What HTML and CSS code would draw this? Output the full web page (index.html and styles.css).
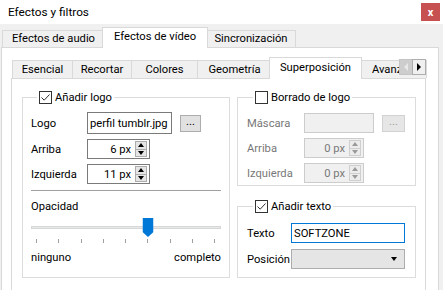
FILE: index.html
```html
<!DOCTYPE html>
<html lang="es">
<head>
<meta charset="utf-8">
<title>Efectos y filtros</title>
<link rel="stylesheet" href="styles.css">
</head>
<body>
<div class="titlebar">
  <span class="title">Efectos y filtros</span>
  <span class="close">x</span>
</div>
<div class="client">
  <div class="tabbar outer-tabs">
    <div class="tab">Efectos de audio</div>
    <div class="tab active">Efectos de vídeo</div>
    <div class="tab">Sincronización</div>
  </div>
  <div class="pane outer-pane">
    <div class="tabbar inner-tabs">
      <div class="tab">Esencial</div>
      <div class="tab">Recortar</div>
      <div class="tab">Colores</div>
      <div class="tab">Geometría</div>
      <div class="tab active">Superposición</div>
      <div class="tab tab-last">Avanzado</div>
      <div class="scroller">
        <span class="scroll-btn scroll-left"><span class="arrow-left"></span></span>
        <span class="scroll-btn scroll-right"><span class="arrow-right"></span></span>
      </div>
    </div>
    <div class="pane inner-pane">
      <fieldset class="group group-logo">
        <legend class="legend">
          <span class="check checked"><svg width="11" height="11" viewBox="0 0 11 11"><path d="M1.5 5.5 L4.2 8.2 L9.5 2.5" fill="none" stroke="#333" stroke-width="1"/></svg></span>
          <span>Añadir logo</span>
        </legend>
        <div class="form form-logo">
          <span class="lbl">Logo</span>
          <div class="field-row">
            <div class="edit edit-logo">perfil tumblr.jpg</div>
            <div class="btn">...</div>
          </div>
          <span class="lbl">Arriba</span>
          <div class="spin">
            <span class="spin-val">6 px</span>
            <span class="spin-btns"><span class="spin-up"><i class="tri-up"></i></span><span class="spin-down"><i class="tri-down"></i></span></span>
          </div>
          <span class="lbl">Izquierda</span>
          <div class="spin">
            <span class="spin-val">11 px</span>
            <span class="spin-btns"><span class="spin-up"><i class="tri-up"></i></span><span class="spin-down"><i class="tri-down"></i></span></span>
          </div>
        </div>
        <div class="sep"></div>
        <div class="opacity">
          <div class="op-label">Opacidad</div>
          <div class="slider">
            <div class="groove"></div>
            <div class="track">
              <svg class="handle" style="left: 62.5%" width="11" height="19" viewBox="0 0 11 19"><path d="M0 0 H11 V14 L5.5 19 L0 14 Z" fill="#0078d7"/></svg>
            </div>
          </div>
          <div class="ticks">
            <i></i><i></i><i></i><i></i><i></i><i></i><i></i><i></i><i></i>
          </div>
          <div class="ends"><span>ninguno</span><span>completo</span></div>
        </div>
      </fieldset>
      <div class="col-right">
        <fieldset class="group group-erase">
          <legend class="legend">
            <span class="check"></span>
            <span>Borrado de logo</span>
          </legend>
          <div class="form form-erase">
            <span class="lbl disabled">Máscara</span>
            <div class="field-row">
              <div class="edit edit-mask disabled-box"></div>
              <div class="btn btn-disabled">...</div>
            </div>
            <span class="lbl disabled">Arriba</span>
            <div class="spin spin-disabled">
              <span class="spin-val">0 px</span>
              <span class="spin-btns"><span class="spin-up"><i class="tri-up"></i></span><span class="spin-down"><i class="tri-down"></i></span></span>
            </div>
            <span class="lbl disabled">Izquierda</span>
            <div class="spin spin-disabled">
              <span class="spin-val">0 px</span>
              <span class="spin-btns"><span class="spin-up"><i class="tri-up"></i></span><span class="spin-down"><i class="tri-down"></i></span></span>
            </div>
          </div>
        </fieldset>
        <fieldset class="group group-text">
          <legend class="legend">
            <span class="check checked"><svg width="11" height="11" viewBox="0 0 11 11"><path d="M1.5 5.5 L4.2 8.2 L9.5 2.5" fill="none" stroke="#333" stroke-width="1"/></svg></span>
            <span>Añadir texto</span>
          </legend>
          <div class="form form-text">
            <span class="lbl">Texto</span>
            <div class="edit edit-focus">SOFTZONE</div>
            <span class="lbl">Posición</span>
            <div class="combo"><i class="tri-down combo-arrow"></i></div>
          </div>
        </fieldset>
      </div>
    </div>
  </div>
</div>
</body>
</html>
```
FILE: styles.css
```css
* { box-sizing: border-box; }

body {
  margin: 0;
  width: 443px;
  height: 290px;
  overflow: hidden;
  background: #f0f0f0;
  font-family: Roboto, "Noto Sans", sans-serif;
  font-size: 11.2px;
  line-height: 15px;
  color: #000;
}

.titlebar {
  height: 24px;
  background: #fff;
  display: flex;
  align-items: center;
  justify-content: space-between;
  padding: 0 3px 0 8px;
}

.title { font-size: 11.8px; }

.close {
  width: 19px;
  height: 18px;
  background: #c75050;
  color: #fff;
  font-size: 11px;
  font-weight: bold;
  display: flex;
  align-items: center;
  justify-content: center;
}

.client { padding-top: 3px; }

.tabbar {
  display: grid;
  align-items: end;
}

.outer-tabs {
  grid-template-columns: 102px 102px 89px;
  padding-left: 2px;
  height: 20px;
}

.tab {
  height: 17px;
  margin-right: -1px;
  border: 1px solid #d9d9d9;
  border-bottom: 0;
  background: #f0f0f0;
  text-align: center;
  line-height: 16px;
  white-space: nowrap;
  overflow: hidden;
}

.tab.active {
  height: 21px;
  margin: 0 -2px -1px;
  background: #fff;
  position: relative;
  z-index: 1;
  line-height: 18px;
}

.pane {
  background: #fff;
  border: 1px solid #d9d9d9;
}

.outer-pane {
  margin-left: 1px;
  width: 438px;
  height: 260px;
  padding: 9px 0 0 9px;
}

.inner-tabs {
  grid-template-columns: 60px 59px 66px 74px 89px 1fr;
  width: 415px;
  height: 21px;
  padding-left: 1px;
  position: relative;
}

.inner-tabs .tab { height: 18px; line-height: 17px; }
.inner-tabs .tab.active { height: 22px; line-height: 19px; }
.inner-tabs .tab-last { text-align: left; padding-left: 11px; }

.scroller {
  position: absolute;
  right: 0;
  top: 2px;
  display: flex;
  z-index: 2;
}

.scroll-btn {
  width: 14px;
  height: 16px;
  display: flex;
  align-items: center;
  justify-content: center;
  border: 1px solid #adadad;
}

.scroll-left { background: #cdcdcd; border-color: #c4c4c4; }
.scroll-right { background: #f0f0f0; margin-left: -1px; }

.arrow-left {
  width: 0; height: 0;
  border-top: 4px solid transparent;
  border-bottom: 4px solid transparent;
  border-right: 4px solid #e8e8e8;
}

.arrow-right {
  width: 0; height: 0;
  border-top: 4px solid transparent;
  border-bottom: 4px solid transparent;
  border-left: 4px solid #000;
}

.inner-pane {
  width: 415px;
  height: 230px;
  display: flex;
  gap: 7px;
  padding: 11px 0 0 10px;
}

.group {
  margin: 0;
  padding: 0;
  min-width: 0;
  border: 1px solid #dcdcdc;
}

.legend {
  margin-left: 6px;
  padding: 0 2px;
  display: flex;
  align-items: center;
  gap: 3px;
  height: 15px;
  line-height: 15px;
}

.check {
  width: 13px;
  height: 13px;
  border: 1px solid #333;
  background: #fff;
  display: flex;
  align-items: center;
  justify-content: center;
}

.group-logo {
  width: 208px;
  height: 188px;
  padding: 0 8px 0 8px;
}

.col-right {
  width: 179px;
  display: flex;
  flex-direction: column;
  gap: 13px;
}

.group-erase { height: 96px; padding: 0 9px; }
.group-text { height: 79px; padding: 0 9px; }

.form {
  display: grid;
  align-items: center;
}

.form-logo {
  margin-top: 7px;
  grid-template-columns: 56px 1fr;
  grid-template-rows: 22px 20px 20px;
  row-gap: 5px;
}

.form-erase {
  margin-top: 8px;
  grid-template-columns: 57px 1fr;
  grid-template-rows: 20px 20px 20px;
  row-gap: 5px;
}

.form-text {
  margin-top: 9px;
  grid-template-columns: 44px 1fr;
  grid-template-rows: 20px 20px;
  row-gap: 6px;
}

.lbl { white-space: nowrap; }
.disabled { color: #787878; }

.field-row {
  display: flex;
  align-items: center;
  height: 100%;
}

.edit {
  height: 100%;
  border: 1px solid #7a7a7a;
  background: #fff;
  padding: 0 2px;
  display: flex;
  align-items: center;
  white-space: nowrap;
  overflow: hidden;
}

.edit-logo { width: 85px; }
.edit-mask { width: 70px; }
.edit-focus { width: 114px; border-color: #0078d7; }

.disabled-box { background: #f0f0f0; border-color: #cccccc; }

.btn {
  width: 21px;
  height: 17px;
  margin-left: 8px;
  border: 1px solid #adadad;
  background: #e1e1e1;
  display: flex;
  align-items: center;
  justify-content: center;
  line-height: 10px;
  padding-bottom: 3px;
}

.btn-disabled {
  width: 23px;
  color: #a0a0a0;
  border-color: #d2d2d2;
  background: #e6e6e6;
}

.spin {
  width: 63px;
  height: 20px;
  border: 1px solid #7a7a7a;
  background: #fff;
  display: flex;
  align-items: center;
  justify-content: flex-end;
  padding-right: 2px;
  gap: 4px;
}

.spin-disabled {
  width: 60px;
  border-color: #cccccc;
  background: #f0f0f0;
  color: #787878;
}

.spin-btns {
  width: 12px;
  height: 16px;
  display: flex;
  flex-direction: column;
  border: 1px solid #adadad;
  background: #e5e5e5;
}

.spin-disabled .spin-btns { border-color: #cfcfcf; background: #ececec; }

.spin-up, .spin-down {
  flex: 1;
  display: flex;
  align-items: center;
  justify-content: center;
}

.spin-up { border-bottom: 1px solid #adadad; }
.spin-disabled .spin-up { border-bottom-color: #cfcfcf; }

.tri-up, .tri-down {
  display: block;
  width: 0;
  height: 0;
  border-left: 3.5px solid transparent;
  border-right: 3.5px solid transparent;
}

.tri-up { border-bottom: 4px solid #000; }
.tri-down { border-top: 4px solid #000; }
.spin-disabled .tri-up { border-bottom-color: #9a9a9a; }
.spin-disabled .tri-down { border-top-color: #9a9a9a; }

.combo {
  width: 114px;
  height: 20px;
  border: 1px solid #adadad;
  background: #e5e5e5;
  display: flex;
  align-items: center;
  justify-content: flex-end;
  padding-right: 7px;
}

.sep {
  height: 1px;
  margin: 6px 0 0 0;
  background: #a0a0a0;
}

.op-label { margin-top: 8px; }

.slider {
  position: relative;
  height: 19px;
  margin-top: 4px;
}

.groove {
  position: absolute;
  left: 0;
  right: 0;
  top: 8px;
  height: 3px;
  background: #e7eaea;
  border: 1px solid #d6d6d6;
}

.track {
  position: relative;
  height: 100%;
  margin: 0 6px 0 5px;
}

.handle {
  position: absolute;
  top: 0;
  transform: translateX(-50%);
}

.ticks {
  display: flex;
  justify-content: space-between;
  height: 4px;
  margin: 2px 6px 0 5px;
}

.ticks i {
  width: 1px;
  height: 4px;
  background: #a0a0a0;
}

.ends {
  display: flex;
  justify-content: space-between;
  margin-top: 7px;
}
```
